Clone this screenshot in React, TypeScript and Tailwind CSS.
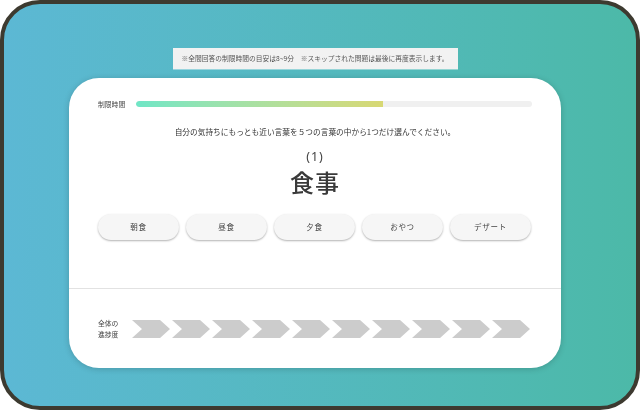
const font = { fontFamily: '"Noto Sans CJK JP", "Noto Sans", sans-serif' };

const choices = ["朝食", "昼食", "夕食", "おやつ", "デザート"];

export default function App() {
  return (
    <div className="w-[640px] h-[410px] bg-white overflow-hidden" style={font}>
      <div className="w-full h-full box-border border-4 border-[#3d3a30] rounded-[40px] bg-gradient-to-r from-[#5cb8d4] to-[#4cb9a8] flex flex-col items-center pt-[44px] pr-[10px] blur-[0.3px]">
        <div className="w-[285px] h-[21px] bg-[#f2f2f2] flex items-center justify-center text-[6.75px] text-[#555] whitespace-pre shadow-[0_1px_0_rgba(255,255,255,0.4)]">
          ※全間回答の制限時間の目安は8~9分　※スキップされた問題は最後に再度表示します。
        </div>
        <div className="mt-[9px] w-[492px] h-[290px] bg-white rounded-[30px] shadow-[0_1px_6px_rgba(0,0,0,0.18)] flex flex-col">
          <div className="flex items-center pl-[29px] pr-[29px] pt-[21px]">
            <span className="w-[38px] text-[6.8px] leading-[10px] text-[#444]">制限時間</span>
            <div className="flex-1 h-[6px] rounded-full bg-[#f0f0f0] overflow-hidden">
              <div className="w-[247px] h-full rounded-l-full bg-gradient-to-r from-[#6fe6c6] to-[#d8d873]" />
            </div>
          </div>
          <p className="mt-[17px] text-center text-[7.7px] leading-[12px] text-[#333]">
            自分の気持ちにもっとも近い言葉を５つの言葉の中から1つだけ選んでください。
          </p>
          <p className="mt-[12px] text-center font-['Noto_Sans'] text-[12.5px] leading-[14px] tracking-[1px] text-[#444]">(1)</p>
          <p className="mt-[6px] text-center text-[24px] leading-[24px] font-medium tracking-[1px] text-[#3a3a3a]">食事</p>
          <div className="mt-[20px] px-[29px] flex gap-[7px]">
            {choices.map((c) => (
              <div
                key={c}
                className="w-[81px] h-[26px] rounded-full bg-[#f6f6f6] flex items-center justify-center text-[7.5px] tracking-[0.7px] text-[#444] shadow-[0_1px_2px_rgba(0,0,0,0.3)]"
              >
                {c}
              </div>
            ))}
          </div>
          <div className="mt-[48px] h-px bg-[#e2e2e2]" />
          <div className="flex items-center pl-[29px] pt-[29px]">
            <span className="w-[34px] text-[6.8px] leading-[11px] text-[#444]">
              全体の
              <br />
              進捗度
            </span>
            <div className="flex gap-[2px] -mt-[1px] -ml-[0.5px]">
              {Array.from({ length: 10 }).map((_, i) => (
                <svg key={i} width="38" height="18" viewBox="0 0 38 18" className="shrink-0">
                  <polygon points="0,0 28,0 38,9 28,18 0,18 10,9" fill="#cccccc" />
                </svg>
              ))}
            </div>
          </div>
        </div>
      </div>
    </div>
  );
}
